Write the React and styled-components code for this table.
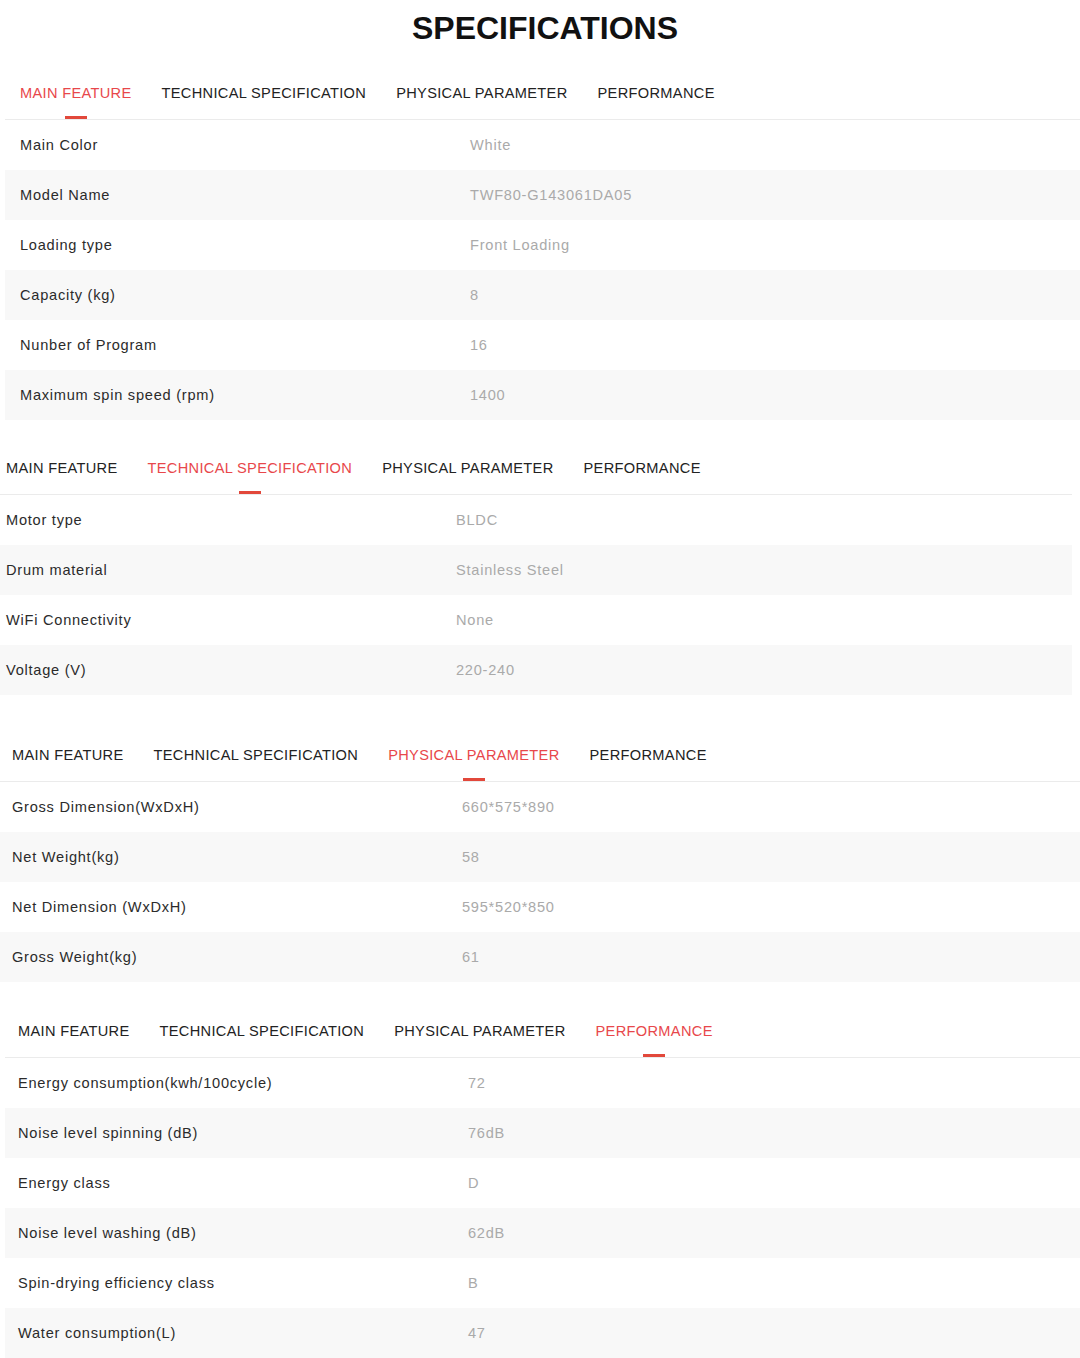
import React from "react";
import styled, { createGlobalStyle } from "styled-components";

const GlobalStyle = createGlobalStyle`
  * { box-sizing: border-box; margin: 0; padding: 0; }
  body {
    background: #fff;
    color: #333;
    font-family: "Liberation Sans", Arial, sans-serif;
  }
`;

const Page = styled.div`
  width: 1080px;
  display: flex;
  flex-direction: column;
`;

const Heading = styled.h1`
  margin-top: 8px;
  font-size: 32px;
  line-height: 40px;
  font-weight: 700;
  text-align: center;
  color: #111;
  padding-left: 10px;
`;

const Section = styled.section`
  margin-top: ${(p) => p.$top}px;
  margin-left: ${(p) => p.$left}px;
  margin-right: ${(p) => p.$right}px;
`;

const TabBar = styled.nav`
  display: flex;
  gap: 30px;
  padding-left: ${(p) => p.$pad}px;
  border-bottom: 1px solid #ebebeb;
`;

const Tab = styled.span`
  position: relative;
  padding: 15px 0 17px;
  font-size: 14.6px;
  line-height: 18px;
  letter-spacing: 0.33px;
  color: ${(p) => (p.$active ? "#e8474b" : "#222")};

  &::after {
    content: "";
    display: ${(p) => (p.$active ? "block" : "none")};
    position: absolute;
    left: 50%;
    bottom: 0;
    width: 22px;
    height: 3px;
    margin-left: -11px;
    background: #e2483b;
  }
`;

const Row = styled.div`
  display: grid;
  grid-template-columns: 450px 1fr;
  align-items: center;
  height: 50px;
  padding-left: ${(p) => p.$pad}px;
  background: ${(p) => (p.$shade ? "#f8f8f8" : "#fff")};
  font-size: 14.6px;
  line-height: 18px;
  letter-spacing: 0.75px;
  padding-bottom: 1px;
`;

const Label = styled.span`
  color: #2b2b2b;
`;

const Value = styled.span`
  color: #aaa;
`;

const tabs = [
  "MAIN FEATURE",
  "TECHNICAL SPECIFICATION",
  "PHYSICAL PARAMETER",
  "PERFORMANCE",
];

const sections = [
  {
    active: 0,
    top: 21,
    left: 5,
    right: 0,
    pad: 15,
    rows: [
      ["Main Color", "White"],
      ["Model Name", "TWF80-G143061DA05"],
      ["Loading type", "Front Loading"],
      ["Capacity (kg)", "8"],
      ["Nunber of Program", "16"],
      ["Maximum spin speed (rpm)", "1400"],
    ],
  },
  {
    active: 1,
    top: 24,
    left: 0,
    right: 8,
    pad: 6,
    rows: [
      ["Motor type", "BLDC"],
      ["Drum material", "Stainless Steel"],
      ["WiFi Connectivity", "None"],
      ["Voltage (V)", "220-240"],
    ],
  },
  {
    active: 2,
    top: 36,
    left: 0,
    right: 0,
    pad: 12,
    rows: [
      ["Gross Dimension(WxDxH)", "660*575*890"],
      ["Net Weight(kg)", "58"],
      ["Net Dimension (WxDxH)", "595*520*850"],
      ["Gross Weight(kg)", "61"],
    ],
  },
  {
    active: 3,
    top: 25,
    left: 5,
    right: 0,
    pad: 13,
    rows: [
      ["Energy consumption(kwh/100cycle)", "72"],
      ["Noise level spinning (dB)", "76dB"],
      ["Energy class", "D"],
      ["Noise level washing (dB)", "62dB"],
      ["Spin-drying efficiency class", "B"],
      ["Water consumption(L)", "47"],
    ],
  },
];

function SpecBlock({ data }) {
  return (
    <Section $top={data.top} $left={data.left} $right={data.right}>
      <TabBar $pad={data.pad}>
        {tabs.map((t, i) => (
          <Tab key={t} $active={i === data.active}>
            {t}
          </Tab>
        ))}
      </TabBar>
      {data.rows.map(([label, value], i) => (
        <Row key={label} $pad={data.pad} $shade={i % 2 === 1}>
          <Label>{label}</Label>
          <Value>{value}</Value>
        </Row>
      ))}
    </Section>
  );
}

export default function App() {
  return (
    <>
      <GlobalStyle />
      <Page>
        <Heading>SPECIFICATIONS</Heading>
        {sections.map((s) => (
          <SpecBlock key={s.active} data={s} />
        ))}
      </Page>
    </>
  );
}
